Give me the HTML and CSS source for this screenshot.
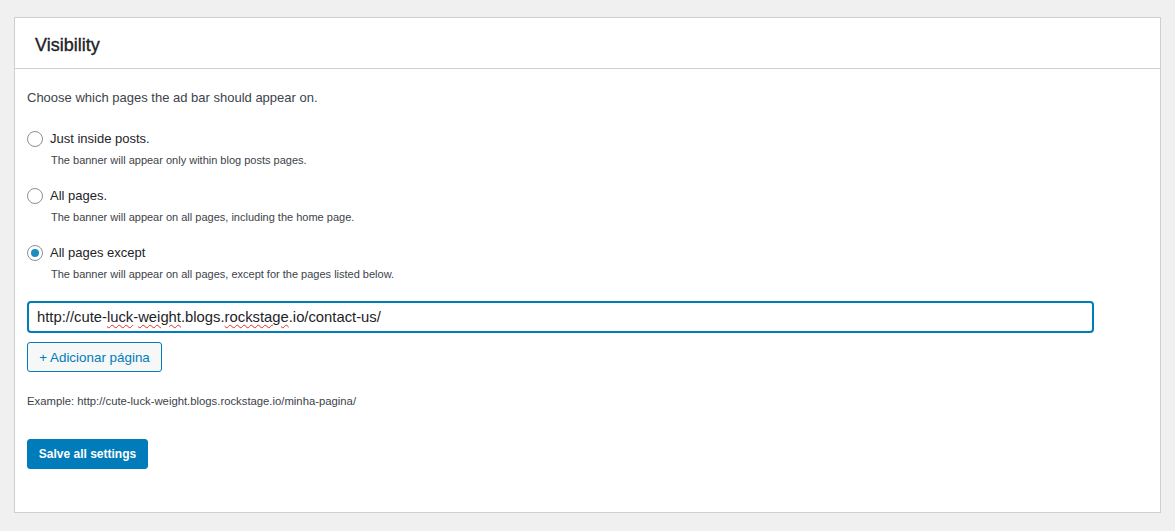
FILE: index.html
```
<!DOCTYPE html>
<html lang="en">
<head>
<meta charset="utf-8">
<title>Visibility</title>
<link rel="stylesheet" href="styles.css">
</head>
<body>
<div class="card">
  <div class="card-head"><h2 class="card-title">Visibility</h2></div>
  <div class="card-body">
    <p class="intro">Choose which pages the ad bar should appear on.</p>
    <div class="options">
      <label class="option">
        <span class="opt-row"><span class="radio"></span><span class="opt-label">Just inside posts.</span></span>
        <span class="opt-desc">The banner will appear only within blog posts pages.</span>
      </label>
      <label class="option">
        <span class="opt-row"><span class="radio"></span><span class="opt-label">All pages.</span></span>
        <span class="opt-desc">The banner will appear on all pages, including the home page.</span>
      </label>
      <label class="option">
        <span class="opt-row"><span class="radio checked"></span><span class="opt-label">All pages except</span></span>
        <span class="opt-desc">The banner will appear on all pages, except for the pages listed below.</span>
      </label>
    </div>
    <div class="url-input" role="textbox">http://cute-<span class="spell">luck</span>-<span class="spell">weight</span>.blogs.<span class="spell">rockstage</span>.io/contact-us/</div>
    <button class="btn-secondary" type="button">+ Adicionar página</button>
    <p class="example">Example: http://cute-luck-weight.blogs.rockstage.io/minha-pagina/</p>
    <button class="btn-primary" type="button">Salve all settings</button>
  </div>
</div>
</body>
</html>
```
FILE: styles.css
```
* { box-sizing: border-box; }
html, body { margin: 0; padding: 0; }
body {
  background: #f0f0f1;
  font-family: "Liberation Sans", Arial, sans-serif;
  color: #3c434a;
  font-size: 13px;
  padding: 17px 15px 0 14px;
}
.card {
  width: 1147px;
  height: 496px;
  background: #fff;
  border: 1px solid #ccd0d4;
}
.card-head {
  height: 51px;
  border-bottom: 1px solid #ccd0d4;
  display: flex;
  align-items: center;
  padding: 0 20px;
}
.card-title {
  margin: 0;
  font-size: 18px;
  font-weight: 400;
  -webkit-text-stroke: 0.35px #1d2327;
  color: #1d2327;
  line-height: 1;
  position: relative;
  top: 2px;
}
.card-body {
  padding: 19px 12px 0 12px;
  display: flex;
  flex-direction: column;
  align-items: flex-start;
}
.intro {
  margin: 0;
  line-height: 20px;
  font-size: 13px;
  color: #3c434a;
}
.options {
  margin-top: 21px;
  display: flex;
  flex-direction: column;
  gap: 17px;
}
.option {
  display: flex;
  flex-direction: column;
}
.opt-row {
  display: flex;
  align-items: center;
  gap: 7px;
  height: 20px;
}
.radio {
  width: 16px;
  height: 16px;
  border-radius: 50%;
  border: 1px solid #8c8f94;
  background: #fff;
  display: flex;
  align-items: center;
  justify-content: center;
  flex: none;
}
.radio.checked::before {
  content: "";
  width: 8px;
  height: 8px;
  border-radius: 50%;
  background: #1e8cbe;
}
.opt-label {
  font-size: 13px;
  color: #1d2327;
  line-height: 20px;
}
.opt-desc {
  margin-left: 24px;
  margin-top: 2px;
  font-size: 11px;
  line-height: 18px;
  color: #3c434a;
}
.url-input {
  margin-top: 18px;
  width: 1067px;
  height: 32px;
  border: 2px solid #007cba;
  border-radius: 4px;
  padding: 0 8px;
  font-size: 14.8px;
  line-height: 28px;
  color: #1d2327;
}
.spell {
  text-decoration: underline wavy #e0302f;
  text-decoration-thickness: 1px;
  text-underline-offset: 2px;
}
.btn-secondary {
  margin-top: 9px;
  height: 30px;
  width: 135px;
  border: 1px solid #007cba;
  border-radius: 3px;
  background: #f6f7f7;
  color: #007cba;
  font-family: inherit;
  font-size: 13.4px;
  padding: 0;
  cursor: pointer;
}
.example {
  margin: 20px 0 0 0;
  font-size: 11.3px;
  line-height: 18px;
  color: #3c434a;
}
.btn-primary {
  margin-top: 29px;
  height: 30px;
  width: 121px;
  border: 1px solid #007cba;
  border-radius: 3px;
  background: #007cba;
  color: #fff;
  font-family: inherit;
  font-size: 12px;
  font-weight: 700;
  padding: 0;
  cursor: pointer;
}
```
